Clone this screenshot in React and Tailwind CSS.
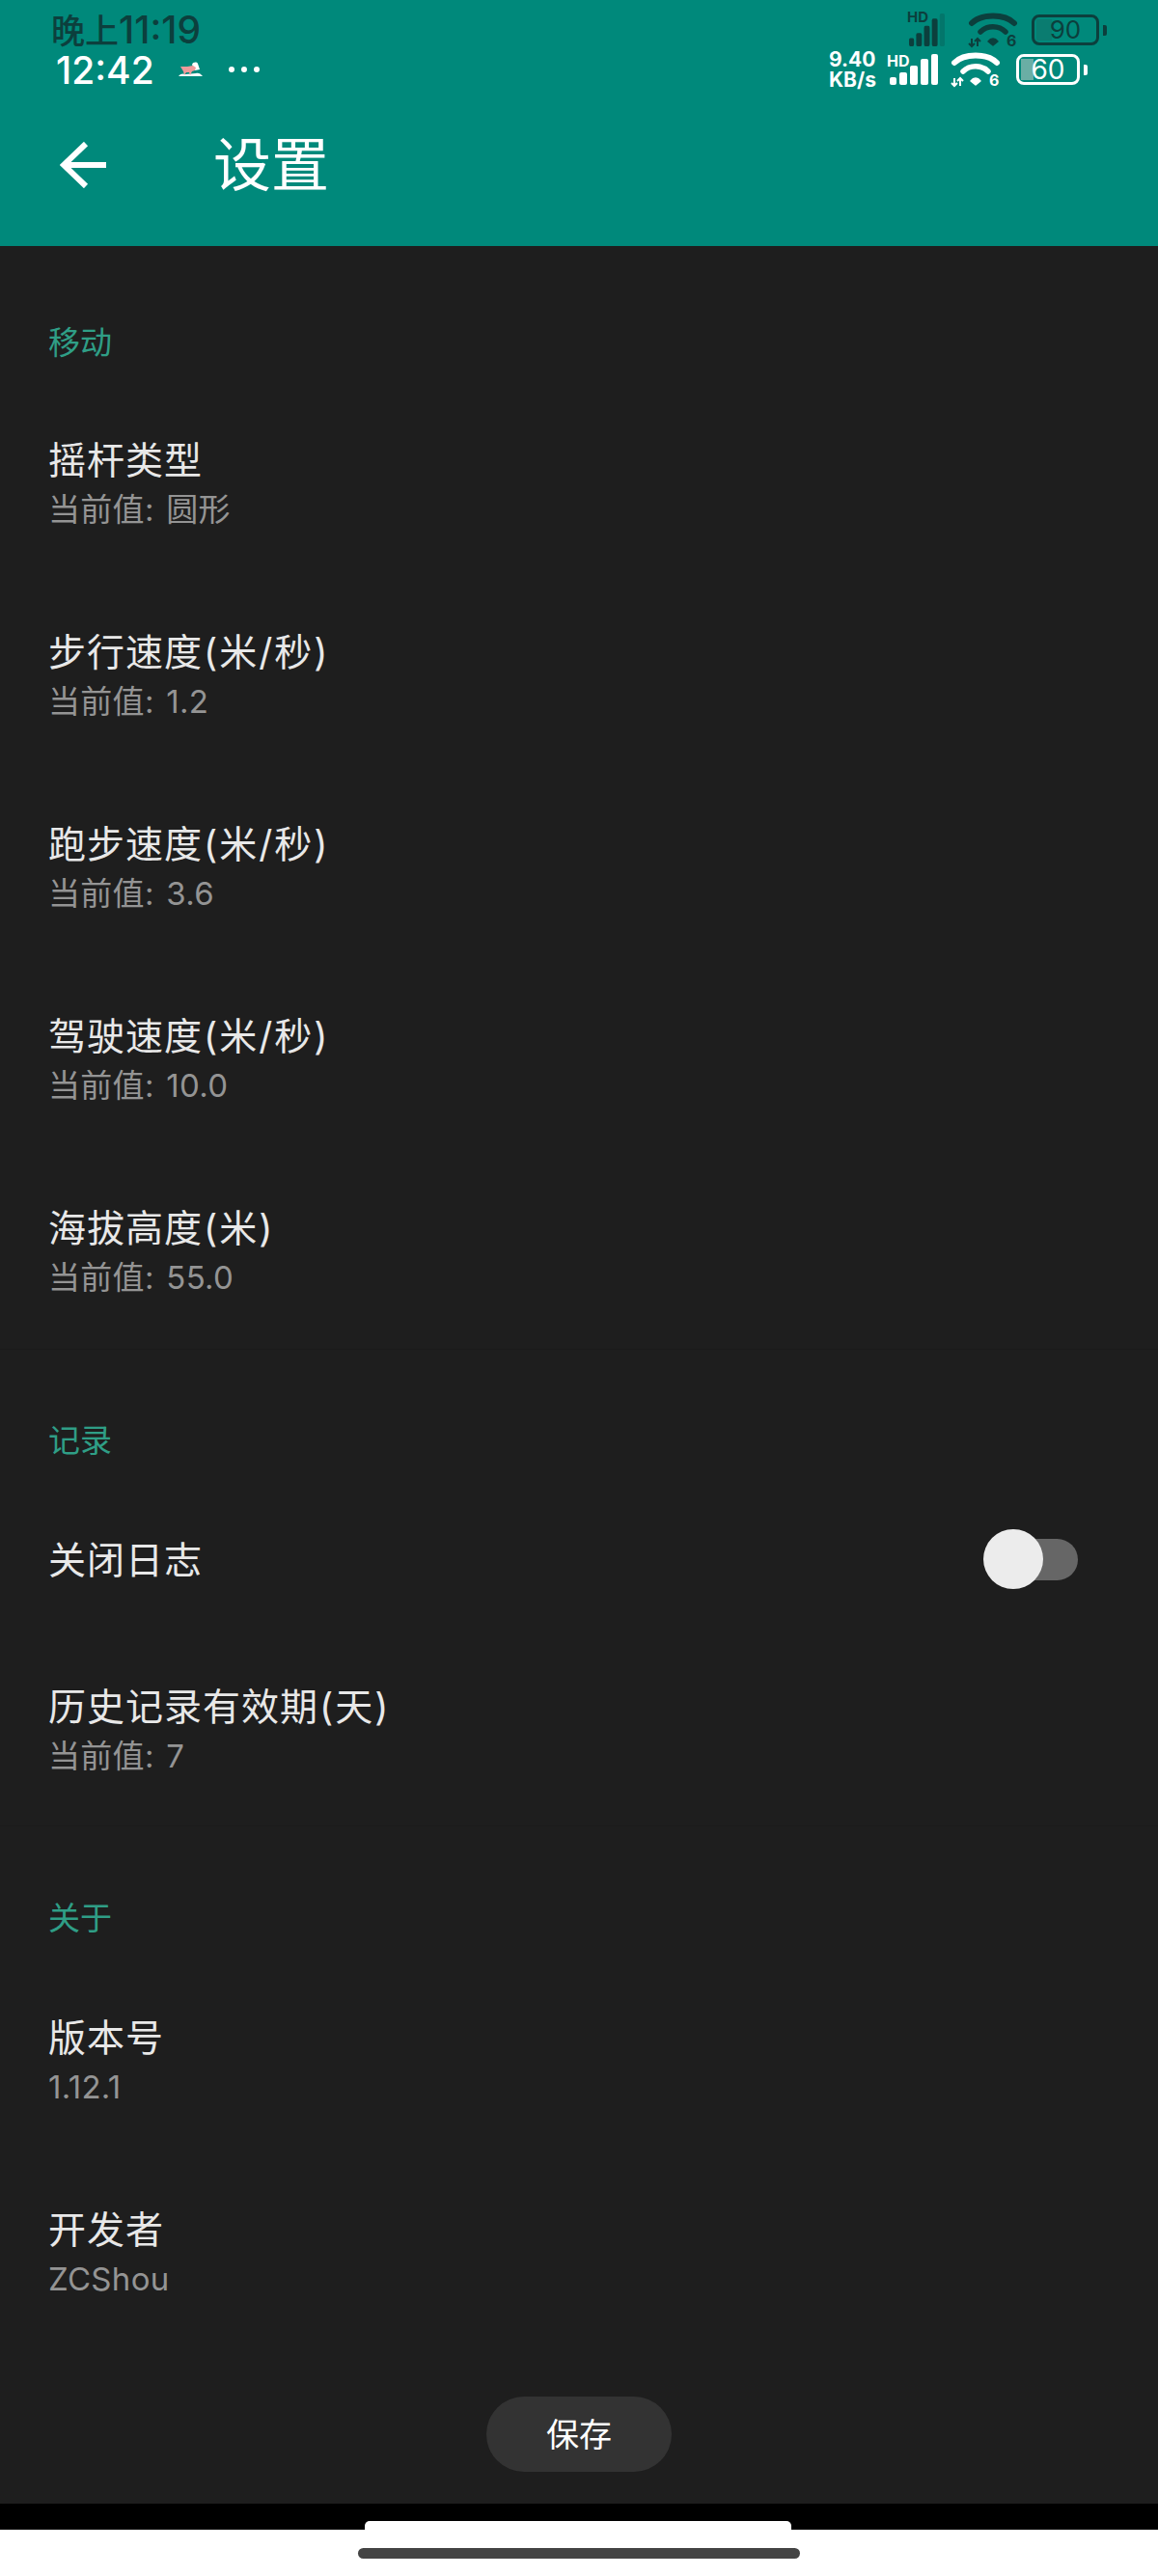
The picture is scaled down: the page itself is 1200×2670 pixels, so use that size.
function Title({ text }) {
  return (
    <>
      {text.split(/([(/)])/).map((part, i) =>
        i % 2 === 1 ? <span key={i} className="px-[1px]">{part}</span> : part
      )}
    </>
  );
}

function Row({ title, sub, short }) {
  return (
    <div className={short ? 'flex h-[196px] flex-col justify-start pt-[48px] pl-[50px]' : 'flex h-[199px] flex-col justify-center pl-[50px]'}>
      <div className="text-[39px] leading-[50px] tracking-[1px] text-[#e8e8e8]"><Title text={title} /></div>
      <div className="text-[33px] leading-[52px] tracking-[0.3px] text-[#949494] [word-spacing:3px]">{sub}</div>
    </div>
  );
}

function Section({ title, divider, pad, children }) {
  return (
    <section className={divider ? 'border-b border-[#1b1b1b]' : ''}>
      <div className={pad + ' pl-[50px] pb-[24px] text-[33px] leading-[48px] text-[#2f9e86]'}>{title}</div>
      {children}
    </section>
  );
}

function Signal({ color, width, height, dim }) {
  return (
    <svg width={width} height={height} viewBox="0 0 50 32" preserveAspectRatio="none">
      <g fill={color}>
        <rect x="0" y="24" width="7" height="8" rx="2" />
        <rect x="10" y="19" width="8" height="13" rx="2" />
        <rect x="21" y="12" width="8" height="20" rx="2" />
        <rect x="32" y="5" width="8" height="27" rx="2" />
        <rect x="43" y="0" width="7" height="32" rx="2" opacity={dim ? 0.25 : 1} />
      </g>
    </svg>
  );
}

function Wifi({ color }) {
  return (
    <svg width="50" height="36" viewBox="0 0 50 36" fill="none" className="overflow-visible">
      <path d="M3 11C13 1 37 1 47 11" stroke={color} strokeWidth="6" strokeLinecap="round" />
      <path d="M12 20C19 13 31 13 38 20" stroke={color} strokeWidth="5.5" strokeLinecap="round" />
      <path d="M20 30C23 26 27 26 30 30L25 34Z" fill={color} stroke={color} strokeWidth="1.5" strokeLinejoin="round" />
      <path d="M3 27V35M0 32L3 35L6 32M9 35V27M6 30L9 27L12 30" stroke={color} strokeWidth="2" />
      <text x="39" y="35" fontSize="16" fontWeight="700" fill={color}>6</text>
    </svg>
  );
}

function Battery({ color, width, height, level, value, fill, size }) {
  return (
    <div className="flex items-center gap-[4px]">
      <div className="relative flex items-center justify-center rounded-[8px] border-[3px]" style={{ borderColor: color, width, height }}>
        <div className="absolute inset-y-[2px] left-[2px]" style={{ width: level, background: fill }} />
        <span className="relative leading-none" style={{ color, fontSize: size }}>{value}</span>
      </div>
      <div className="h-[11px] w-[4px] rounded-r-[2px]" style={{ background: color }} />
    </div>
  );
}

function Pig() {
  return (
    <svg width="25" height="16" viewBox="0 0 25 16">
      <path d="M0 15C2 12 5 12 7 13L18 12C20 11 23 12 25 15Z" fill="#ffffff" />
      <path d="M14 3C15 0 19 0 20 2L22 8L17 9Z" fill="#ffffff" />
      <path d="M2 5L9 5L15 4L18 6L17 9L14 10L12 14L11 11L8 11L6 14L5 10Z" fill="#ef9a9a" />
    </svg>
  );
}

export default function App() {
  return (
    <div className="flex h-[2670px] w-[1200px] flex-col bg-white" style={{ fontFamily: 'Inter, "Noto Sans CJK SC", sans-serif' }}>
      <header className="h-[255px] shrink-0 bg-[#00897b]">
        <div className="flex h-[52px] items-center justify-between pl-[53px] pr-[53px] pt-[10px]">
          <span className="text-[35px] font-medium leading-[40px] text-[#0c3f3d]">晚上<span className="text-[39px]">11:19</span></span>
          <div className="flex items-center">
            <div className="relative h-[34px] w-[37px]">
              <span className="absolute -left-[2px] -top-[4px] text-[15px] font-bold leading-none text-[#0c3f3d]">HD</span>
              <Signal color="#0c3f3d" width={37} height={34} dim />
            </div>
            <div className="ml-[25px]"><Wifi color="#0c3f3d" /></div>
            <div className="ml-[15px]"><Battery color="#0c3f3d" width={70} height={32} level="16px" value="90" fill="#0a7c70" size={26} /></div>
          </div>
        </div>
        <div className="flex h-[40px] items-center justify-between pl-[58px] pr-[73px]">
          <div className="flex items-center">
            <span className="w-[127px] text-[39px] font-medium leading-none text-white">12:42</span>
            <Pig />
            <span className="ml-[27px] flex gap-[7px]">
              <i className="h-[6px] w-[6px] rounded-full bg-white" />
              <i className="h-[6px] w-[6px] rounded-full bg-white" />
              <i className="h-[6px] w-[6px] rounded-full bg-white" />
            </span>
          </div>
          <div className="flex items-center">
            <div className="w-[52px] whitespace-nowrap text-[21px] font-bold leading-[21px] text-white">9.40<br />KB/s</div>
            <div className="relative ml-[11px] h-[32px] w-[50px]">
              <span className="absolute -left-[3px] -top-[1px] text-[16px] font-bold leading-none text-white">HD</span>
              <Signal color="#ffffff" width={50} height={32} />
            </div>
            <div className="ml-[14px]"><Wifi color="#ffffff" /></div>
            <div className="ml-[17px]"><Battery color="#ffffff" width={66} height={32} level="13px" value="60" fill="#6aaea5" size={28} /></div>
          </div>
        </div>
        <div className="flex h-[158px] items-center pl-[62px]">
          <svg width="48" height="48" viewBox="0 0 48 48" fill="none" stroke="#ffffff" strokeWidth="6">
            <path d="M3 24H48" />
            <path d="M27 2L4 24L27 46" />
          </svg>
          <h1 className="ml-[111px] text-[60px] font-normal leading-none text-white">设置</h1>
        </div>
      </header>
      <main className="h-[2340px] shrink-0 bg-[#1e1e1e]">
        <Section title="移动" divider pad="pt-[76px]">
          <Row title="摇杆类型" sub="当前值: 圆形" />
          <Row title="步行速度(米/秒)" sub="当前值: 1.2" />
          <Row title="跑步速度(米/秒)" sub="当前值: 3.6" />
          <Row title="驾驶速度(米/秒)" sub="当前值: 10.0" />
          <Row title="海拔高度(米)" sub="当前值: 55.0" />
        </Section>
        <Section title="记录" divider pad="pt-[70px]">
          <div className="flex h-[155px] items-center justify-between pb-[5px] pl-[50px] pr-[83px]">
            <span className="mt-[3px] text-[39px] tracking-[1px] text-[#e8e8e8]">关闭日志</span>
            <div className="relative h-[43px] w-[92px] rounded-full bg-[#666666]">
              <div className="absolute -left-[6px] -top-[10px] h-[62px] w-[62px] rounded-full bg-[#ececec]" />
            </div>
          </div>
          <Row short title="历史记录有效期(天)" sub="当前值: 7" />
        </Section>
        <Section title="关于" pad="pt-[71px]">
          <div className="pt-[2px]">
            <Row title="版本号" sub="1.12.1" />
            <Row title="开发者" sub="ZCShou" />
          </div>
        </Section>
        <div className="mt-[48px] flex justify-center">
          <button className="h-[78px] w-[192px] rounded-full bg-[#333333] text-[34px] text-white">保存</button>
        </div>
      </main>
      <div className="relative h-[27px] shrink-0 bg-black">
        <div className="absolute left-[378px] top-[18px] h-[12px] w-[442px] rounded-t-[5px] bg-white" />
      </div>
      <div className="flex flex-1 justify-center bg-white pt-[19px]">
        <div className="h-[11px] w-[458px] rounded-full bg-[#444444]" />
      </div>
    </div>
  );
}
